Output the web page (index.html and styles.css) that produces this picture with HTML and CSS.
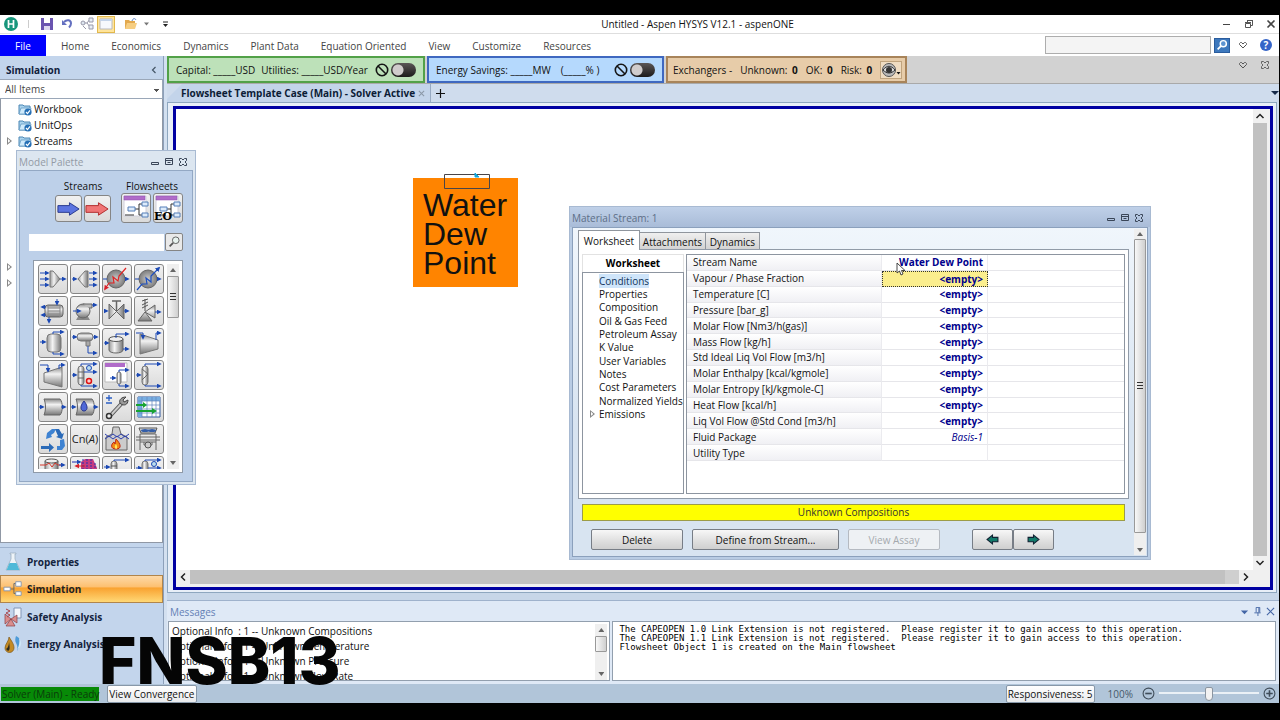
FILE: index.html
```html
<!DOCTYPE html>
<html lang="en">
<head>
<meta charset="utf-8">
<title>Untitled - Aspen HYSYS V12.1 - aspenONE</title>
<link rel="stylesheet" href="styles.css">
</head>
<body>
<svg class="defs" aria-hidden="true">
  <defs>
    <linearGradient id="metal" x1="0" y1="0" x2="0" y2="1"><stop offset="0" stop-color="#8a8a8a"/><stop offset=".35" stop-color="#f2f2f2"/><stop offset="1" stop-color="#777"/></linearGradient>
    <linearGradient id="metalH" x1="0" y1="0" x2="1" y2="0"><stop offset="0" stop-color="#999"/><stop offset=".4" stop-color="#f4f4f4"/><stop offset="1" stop-color="#777"/></linearGradient>
    <radialGradient id="ball"><stop offset="0" stop-color="#c9c9c9"/><stop offset="1" stop-color="#7c7c7c"/></radialGradient>
    <marker id="ab" viewBox="0 0 6 6" refX="4" refY="3" markerWidth="5" markerHeight="5" markerUnits="userSpaceOnUse" orient="auto"><path d="M0 0L6 3L0 6z" fill="#1c49b4"/></marker>
    <marker id="ar" viewBox="0 0 6 6" refX="4" refY="3" markerWidth="5" markerHeight="5" markerUnits="userSpaceOnUse" orient="auto"><path d="M0 0L6 3L0 6z" fill="#d8202a"/></marker>
    <symbol id="folder" viewBox="0 0 14 13"><path d="M1 2h4l1 1h6v8H1z" fill="#a9d3ee" stroke="#4c87b4"/><path d="M3 5h10l-1 6H1z" fill="#cfeafb" stroke="#5a93bd" stroke-width=".7"/><circle cx="10" cy="9" r="3.6" fill="#256fb5"/><path d="M8 9l1.5 1.6L12 7.4" stroke="#fff" fill="none" stroke-width="1.2"/></symbol>
    <symbol id="min" viewBox="0 0 10 10"><path d="M1.500 5.500h7v2h-7z" fill="none" stroke="currentColor"/></symbol>
    <symbol id="max" viewBox="0 0 10 10"><path d="M1.500 1.500h7v6h-7zM1.500 3.500h7M3.500 5.500h3" fill="none" stroke="currentColor"/></symbol>
    <symbol id="cls" viewBox="0 0 10 10"><path d="M1.500 1.500h2L5 3l1.500-1.500h2v2L7 5l1.500 1.500v2h-2L5 7 3.500 8.500h-2v-2L3 5 1.500 3.500z" fill="none" stroke="currentColor"/></symbol>
    <symbol id="heart" viewBox="0 0 10 10"><path d="M1.500 3.500l1-1h1L5 4l1.500-1.500h1l1 1v1L5 8 1.500 4.500z" fill="none" stroke="#555"/></symbol>
    <symbol id="no" viewBox="0 0 14 14"><circle cx="7" cy="7" r="5.700" fill="none" stroke="#151515" stroke-width="1.600"/><path d="M3 3l8 8" stroke="#151515" stroke-width="1.600"/></symbol>
    <symbol id="sheet" viewBox="0 0 28 28"><path d="M2 2h22v20H2z" fill="#fff" stroke="#d0d0dc"/><path d="M2 2h21v4H2z" fill="#b06cc9" stroke="#8f4ead" stroke-width=".5"/><path d="M3 21h9M13 15h4V10h3M17 15v6h3" stroke="#333" fill="none"/><path d="M6 13h7v4H6zM20 8h6v4h-6zM20 19h6v4h-6z" fill="#dcebfb" stroke="#557eb8"/></symbol>
    <symbol id="flow" viewBox="0 0 22 18"><path d="M8 9h4M12 3v11M12 3h3M12 14h3" fill="none" stroke="#666"/><path d="M1 7h7v4H1zM14 1h6v5h-6zM14 12h6v4h-6z" fill="#fff" stroke="#8395ae"/></symbol>
  </defs>
</svg>
<div class="app">
  <header class="titlebar">
    <div class="quick">
      <svg class="logo" viewBox="0 0 14 14"><circle cx="7" cy="7" r="7" fill="#17967c"/><path d="M4.500 3v8M9.500 3v8M4.500 7h5" stroke="#fff" stroke-width="1.700"/></svg>
      <span class="sep"></span>
      <button class="ic" aria-label="Save"><svg viewBox="0 0 14 14"><path d="M1 1h12v12H1z" fill="#6a54b0"/><path d="M4 1h6v5H4z" fill="#fff"/><path d="M4 9h6v4H4z" fill="#ddd8f0"/></svg></button>
      <button class="ic" aria-label="Undo"><svg viewBox="0 0 14 14"><path d="M4 5c3-3 7-2 7 1.500 0 2-1 3-2 4" fill="none" stroke="#6470c0" stroke-width="2"/><path d="M2 3v5h5z" fill="#6470c0"/></svg></button>
      <button class="ic" aria-label="Flowsheet"><svg viewBox="0 0 14 14"><path d="M3 6h4l3-4M7 6l3 4" stroke="#99a" fill="none"/><circle cx="3" cy="6" r="2" fill="#dde6ef" stroke="#99a"/><path d="M9 1h4v4H9zM9 8h4v4H9z" fill="#e7eef6" stroke="#99a"/><path d="M3 9l3 3" stroke="#99a"/></svg></button>
      <button class="ic on" aria-label="Layout"><svg viewBox="0 0 14 14"><path d="M1 2h12v10H1z" fill="#f7f9fd" stroke="#b8b9bf"/><path d="M1 3h12" stroke="#c4d4ea" stroke-width="2"/></svg></button>
      <button class="ic open" aria-label="Open"><svg viewBox="0 0 14 14"><path d="M1 3h4l1 1h5v8H1z" fill="#e3a94d"/><path d="M3 6h10l-2 6H1z" fill="#f6ce82"/><path d="M8 4c1-3 3-3 4-1" fill="none" stroke="#5a82c8"/></svg></button>
      <svg class="drop" viewBox="0 0 7 5"><path d="M1 1h5L3.500 4z" fill="#777"/></svg>
      <svg class="drop more" viewBox="0 0 7 7"><path d="M1 1h5" stroke="#222"/><path d="M1 3h5L3.500 6z" fill="#222"/></svg>
    </div>
    <h1>Untitled - Aspen HYSYS V12.1 - aspenONE</h1>
    <div class="winbtns">
      <button aria-label="Minimize"><svg viewBox="0 0 10 10"><path d="M1 5.500h7" stroke="#444"/></svg></button>
      <button aria-label="Restore"><svg viewBox="0 0 10 10"><path d="M1.500 4.500h5v4h-5zM3.500 4V1.500h5v5H7M1 3.500h6M3 1.500h6" fill="none" stroke="#555"/></svg></button>
      <button aria-label="Close"><svg viewBox="0 0 10 10"><path d="M1.500 1.500l7 7M8.500 1.500l-7 7" stroke="#444" stroke-width="1.600"/></svg></button>
    </div>
  </header>

  <nav class="ribbon">
    <button class="file">File</button>
    <a href="#">Home</a><a href="#">Economics</a><a href="#">Dynamics</a><a href="#">Plant Data</a><a href="#">Equation Oriented</a><a href="#">View</a><a href="#">Customize</a><a href="#">Resources</a>
    <div class="search">
      <input type="text" aria-label="Search">
      <button class="go" aria-label="Search"><svg viewBox="0 0 16 16"><circle cx="9.500" cy="6.500" r="3.500" fill="#5d93d0" stroke="#fff" stroke-width="1.700"/><path d="M7 9l-4 4" stroke="#fff" stroke-width="2"/></svg></button>
      <svg class="s10" viewBox="0 0 10 10"><use href="#heart"/></svg>
      <button class="help" aria-label="Help">?</button>
    </div>
  </nav>

  <div class="main">
    <aside class="side">
      <div class="side-head"><span>Simulation</span><svg class="s10" viewBox="0 0 10 10"><path d="M6.500 2L3.500 5l3 3" fill="none" stroke="#456" stroke-width="1.200"/></svg></div>
      <select class="combo" aria-label="Items"><option>All Items</option></select>
      <ul class="tree">
        <li><svg><use href="#folder"/></svg>Workbook</li>
        <li><svg><use href="#folder"/></svg>UnitOps</li>
        <li class="exp"><svg><use href="#folder"/></svg>Streams</li>
        <li class="exp gap"></li>
        <li class="exp"></li>
      </ul>
      <nav class="modes">
        <button><svg viewBox="0 0 20 20"><path d="M7 1h6v1h-1v5l5 11H3L8 7V2H7z" fill="#eef4f8" stroke="#9db0c2" stroke-width=".8"/><path d="M6.500 11h7l3 7h-13z" fill="#4fb9d8"/></svg>Properties</button>
        <button class="sel"><svg viewBox="0 0 22 18"><use href="#flow"/></svg>Simulation</button>
        <button><svg viewBox="0 0 20 20"><path d="M11 1h7v10h-7z" fill="#f5f8fc" stroke="#8195b5"/><path d="M2 7l6 5-6 5zM14 8l-6 4 6 4zM8 12l-5 7h9z" fill="#d98d8d" stroke="#8c3f45" stroke-width=".7"/><path d="M3 2l4 2-4 2 4 2-3 2" stroke="#a8434a" fill="none"/></svg>Safety Analysis</button>
        <button><svg viewBox="0 0 20 20"><path d="M6 3c4 6 5 8 5 11a4 4 0 0 1-9 0c0-4 4-7 4-11z" fill="#c48b24" stroke="#7d571a" stroke-width=".7"/><path d="M3 15c2-1 3-4 3-7 1 6 1 8-1 9z" fill="#2b2a20"/><path d="M13 2c5 2 6 7 1 15 1-4 0-6-1-8s-1-4 0-7z" fill="#4d9bd8"/><path d="M16 4c4 5 2 9-2 12 2-4 3-8 2-12z" fill="#cfe7f8"/></svg>Energy Analysis</button>
      </nav>
    </aside>

    <section class="work">
      <div class="dash">
        <div class="card green"><span>Capital: _____USD</span><span>Utilities: _____USD/Year</span><i class="tg"><svg viewBox="0 0 14 14"><use href="#no"/></svg><input type="checkbox" class="toggle" aria-label="Economics active"></i></div>
        <div class="card blue"><span>Energy Savings: _____MW</span><span>(_____% )</span><i class="tg"><svg viewBox="0 0 14 14"><use href="#no"/></svg><input type="checkbox" class="toggle" aria-label="Energy active"></i></div>
        <div class="card tan"><span>Exchangers -</span><span>Unknown: <b>0</b></span><span>OK: <b>0</b></span><span>Risk: <b>0</b></span><button class="eye" aria-label="Exchanger view"><svg viewBox="0 0 20 16"><circle cx="8" cy="8" r="6.500" fill="#bbb" stroke="#555"/><path d="M2 8c4-5 8-5 12 0-4 4-8 4-12 0z" fill="#ddd" stroke="#333" stroke-width="1"/><circle cx="8" cy="8" r="3" fill="#333"/><path d="M15.500 10h4l-2 2.500z" fill="#111"/></svg></button></div>
        <div class="dash-end"><svg class="s10" viewBox="0 0 10 10"><use href="#heart"/></svg><svg class="s10" viewBox="0 0 10 10"><use href="#cls"/></svg></div>
      </div>
      <div class="tabs">
        <button class="doc">Flowsheet Template Case (Main) - Solver Active<svg viewBox="0 0 8 8"><path d="M1 1l6 6M7 1L1 7" stroke="#8b98a8" stroke-width="1.200"/></svg></button>
        <button class="plus" aria-label="New tab"><svg viewBox="0 0 10 10"><path d="M5 0v10M0 5h10" stroke="#111" stroke-width="1.300"/></svg></button>
        <svg class="tabdrop" viewBox="0 0 8 5"><path d="M0 0h8L4 4z" fill="#162a4a"/></svg>
      </div>
      <div class="frame">
        <div class="canvas">
          <div class="sheet">
            <div class="node">Water<br>Dew<br>Point<svg class="tag" viewBox="0 0 46 17"><path d="M.5 1.500h45v14H.5z" fill="none" stroke="#4a4548"/><path d="M31 0l4 4h-4z" fill="#12a7dc" stroke="#12a7dc"/></svg></div>
          </div>
          <div class="vbar"><svg viewBox="0 0 10 10"><path d="M1.500 7L5 3.500 8.500 7" fill="none" stroke="#222" stroke-width="1.500"/></svg><span class="thumb"></span><svg viewBox="0 0 10 10"><path d="M1.500 3L5 6.500 8.500 3" fill="none" stroke="#222" stroke-width="1.500"/></svg></div>
          <div class="hbar"><svg viewBox="0 0 10 10"><path d="M7 1.500L3.500 5 7 8.500" fill="none" stroke="#222" stroke-width="1.500"/></svg><span class="thumb"></span><span class="rest"></span><svg viewBox="0 0 10 10"><path d="M3 1.500L6.500 5 3 8.500" fill="none" stroke="#222" stroke-width="1.500"/></svg></div>
        </div>
      </div>
      <section class="messages">
        <div class="msg-head"><span>Messages</span>
          <svg viewBox="0 0 10 10"><path d="M1 4h8L5 8z" fill="#4365a5"/></svg>
          <svg viewBox="0 0 10 10"><path d="M3.500 6V.500h4V6M1.500 6.500h7M5.500 6v4M6.500 1v5" fill="none" stroke="#4365a5"/></svg>
          <svg viewBox="0 0 10 10"><path d="M1 1l8 8M9 1L1 9" stroke="#4365a5" stroke-width="1.200"/></svg>
        </div>
        <div class="msg-body">
          <div class="msg-list">
            <ul><li>Optional Info &nbsp;: 1 -- Unknown Compositions</li><li>Optional Info &nbsp;: 1 -- Unknown Temperature</li><li>Optional Info &nbsp;: 1 -- Unknown Pressure</li><li>Optional Info &nbsp;: 1 -- Unknown Flow Rate</li></ul>
            <div class="sb"><i class="up"></i><span class="thumb"></span><i class="down"></i></div>
          </div>
          <pre class="log">The CAPEOPEN 1.0 Link Extension is not registered.  Please register it to gain access to this operation.
The CAPEOPEN 1.1 Link Extension is not registered.  Please register it to gain access to this operation.
Flowsheet Object 1 is created on the Main flowsheet</pre>
        </div>
      </section>
    </section>
  </div>

  <footer class="status">
    <span class="ready">Solver (Main) - Ready</span>
    <button class="sbtn">View Convergence</button>
    <button class="sbtn resp">Responsiveness: 5</button>
    <label class="pct" for="zoom">100%</label>
    <svg class="zi" viewBox="0 0 12 12"><circle cx="6" cy="6" r="5" fill="none" stroke="#3f4c59"/><path d="M3 6h6" stroke="#3f4c59" stroke-width="1.500"/></svg>
    <input id="zoom" type="range" min="0" max="100" value="50">
    <svg class="zi" viewBox="0 0 12 12"><circle cx="6" cy="6" r="5" fill="none" stroke="#3f4c59"/><path d="M3 6h6M6 3v6" stroke="#3f4c59" stroke-width="1.500"/></svg>
  </footer>
</div>

<section class="win palette">
  <div class="win-title"><span>Model Palette</span><button aria-label="Minimize"><svg><use href="#min"/></svg></button><button aria-label="Maximize"><svg><use href="#max"/></svg></button><button aria-label="Close"><svg><use href="#cls"/></svg></button></div>
  <div class="pal-body">
    <div class="groups">
      <div class="grp"><h2>Streams</h2><div class="row">
        <button class="pb" aria-label="Material stream"><svg viewBox="0 0 26 26"><path d="M2 10h12V7l10 6.500L14 20v-3H2z" fill="#5c74e0" stroke="#28388c"/></svg></button>
        <button class="pb" aria-label="Energy stream"><svg viewBox="0 0 26 26"><path d="M1 10h13V7l10 6.500L14 20v-3H1z" fill="#f07474" stroke="#b02c2c"/></svg></button></div></div>
      <div class="grp"><h2>Flowsheets</h2><div class="row">
        <button class="pb tall" aria-label="Subflowsheet"><svg viewBox="0 0 28 28"><use href="#sheet"/></svg></button>
        <button class="pb tall eo" aria-label="EO subflowsheet"><svg viewBox="0 0 28 28"><use href="#sheet"/></svg><b>EO</b></button></div></div>
    </div>
    <div class="psearch"><input type="text" aria-label="Search palette"><button aria-label="Search"><svg viewBox="0 0 16 16"><circle cx="10" cy="6" r="3.800" fill="#e8f3ef" stroke="#555"/><path d="M7 9l-4 4" stroke="#555" stroke-width="2"/></svg></button></div>
    <div class="pal-box">
      <div class="grid">
        <button class="pb" aria-label="Mixer"><svg viewBox="0 0 28 28"><path d="M11 6h3l7 8-7 8h-3z" fill="url(#metalH)" stroke="#777"/><g stroke="#1c49b4"><path d="M1 8h8" marker-end="url(#ab)"/><path d="M1 14h8" marker-end="url(#ab)"/><path d="M1 20h8" marker-end="url(#ab)"/><path d="M21 14h5" marker-end="url(#ab)"/></g></svg></button>
        <button class="pb" aria-label="Tee"><svg viewBox="0 0 28 28"><path d="M17 6h-3l-7 8 7 8h3z" fill="url(#metalH)" stroke="#777"/><g stroke="#1c49b4"><path d="M1 14h4" marker-end="url(#ab)"/><path d="M18 8h7" marker-end="url(#ab)"/><path d="M18 14h7" marker-end="url(#ab)"/><path d="M18 20h7" marker-end="url(#ab)"/></g></svg></button>
        <button class="pb" aria-label="Cooler"><svg viewBox="0 0 28 28"><circle cx="13" cy="14" r="9" fill="url(#ball)" stroke="#666"/><path d="M23 3l-7 8-1 5-5-4 1 6-5 0-4 6" fill="none" stroke="#e02424" stroke-width="1.200" marker-end="url(#ar)"/><path d="M0 14h4M22 14h3" stroke="#1c49b4" marker-end="url(#ab)"/></svg></button>
        <button class="pb" aria-label="Heater"><svg viewBox="0 0 28 28"><circle cx="13" cy="14" r="9" fill="url(#ball)" stroke="#666"/><path d="M2 25l5-6 5 0-1-6 5 4 0-6 8-8" fill="none" stroke="#1d4fc0" stroke-width="1.200" marker-end="url(#ab)"/><path d="M0 14h4M22 14h3" stroke="#1c49b4" marker-end="url(#ab)"/></svg></button>
        <button class="pb" aria-label="Heat exchanger"><svg viewBox="0 0 28 28"><rect x="6" y="8" width="18" height="12" rx="3" fill="url(#metal)" stroke="#666"/><path d="M9 8v12M21 8v12M9 11h12M9 14h12M9 17h12" stroke="#888"/><g stroke="#1c49b4"><path d="M7 10H3" marker-end="url(#ab)"/><path d="M7 18H3" marker-end="url(#ab)"/><path d="M18 2v5" marker-end="url(#ab)"/><path d="M10 20v5" marker-end="url(#ab)"/></g></svg></button>
        <button class="pb" aria-label="Pump"><svg viewBox="0 0 28 28"><path d="M5 23h14l-3-5H8z" fill="#888"/><circle cx="12" cy="14" r="7" fill="url(#metal)" stroke="#666"/><path d="M12 7h9v4h-3" fill="#bbb" stroke="#666"/><path d="M21 8h4" stroke="#1c49b4" marker-end="url(#ab)"/><path d="M2 14h7" stroke="#1c49b4" marker-end="url(#ab)"/></svg></button>
        <button class="pb" aria-label="Control valve"><svg viewBox="0 0 28 28"><path d="M6 7v15l15-15v15z" fill="url(#metalH)" stroke="#666"/><path d="M13.500 14V4M9 4h9" stroke="#666" stroke-width="1.500"/><path d="M1 14h3" stroke="#1c49b4" marker-end="url(#ab)"/><path d="M21 14h4" stroke="#1c49b4" marker-end="url(#ab)"/></svg></button>
        <button class="pb" aria-label="Relief valve"><svg viewBox="0 0 28 28"><path d="M10 15l-7 9h14zM10 15l10-7v13z" fill="url(#metal)" stroke="#666"/><path d="M10 14V2M7 4l6-2M7 8l6-3M7 11l6-3" stroke="#555"/><path d="M20 15h5" stroke="#1c49b4" marker-end="url(#ab)"/></svg></button>
        <button class="pb" aria-label="Separator"><svg viewBox="0 0 28 28"><rect x="8" y="5" width="14" height="18" rx="4" fill="url(#metalH)" stroke="#777"/><g stroke="#1c49b4" fill="none"><path d="M1 13h5" marker-end="url(#ab)"/><path d="M14 5V3h10" marker-end="url(#ab)"/><path d="M14 23v2h10" marker-end="url(#ab)"/></g></svg></button>
        <button class="pb" aria-label="3-phase separator"><svg viewBox="0 0 28 28"><rect x="6" y="4" width="16" height="8" rx="4" fill="url(#metal)" stroke="#777"/><path d="M15 12h4v5h-4z" fill="#aaa" stroke="#777"/><g stroke="#1c49b4" fill="none"><path d="M1 8h4" marker-end="url(#ab)"/><path d="M22 8h4" marker-end="url(#ab)"/><path d="M17 17v7h8" marker-end="url(#ab)"/></g></svg></button>
        <button class="pb" aria-label="Tank"><svg viewBox="0 0 28 28"><path d="M6 10v11c0 4 14 4 14 0V10z" fill="url(#metalH)" stroke="#666"/><ellipse cx="13" cy="10" rx="7" ry="2.500" fill="#eee" stroke="#555"/><g stroke="#1c49b4" fill="none"><path d="M1 14h4" marker-end="url(#ab)"/><path d="M13 9V5h12" marker-end="url(#ab)"/><path d="M20 20h5" marker-end="url(#ab)"/></g></svg></button>
        <button class="pb" aria-label="Compressor"><svg viewBox="0 0 28 28"><path d="M5 5l18 6v9L5 25z" fill="url(#metal)" stroke="#777"/><g stroke="#1c49b4" fill="none"><path d="M1 4h7v5" marker-end="url(#ab)"/><path d="M21 11V4h4" marker-end="url(#ab)"/></g></svg></button>
        <button class="pb" aria-label="Expander"><svg viewBox="0 0 28 28"><path d="M23 6L5 12v9l18 5z" fill="url(#metal)" stroke="#777"/><g stroke="#1c49b4" fill="none"><path d="M1 4h8v6" marker-end="url(#ab)"/><path d="M20 8V4h5" marker-end="url(#ab)"/></g></svg></button>
        <button class="pb" aria-label="Distillation column"><svg viewBox="0 0 28 28"><rect x="7" y="5" width="6" height="19" rx="3" fill="url(#metalH)" stroke="#777"/><path d="M7 11h6M7 17h6" stroke="#666"/><g stroke="#1c49b4" fill="none"><path d="M1 14h4" marker-end="url(#ab)"/><path d="M10 5V3h15" marker-end="url(#ab)"/><path d="M13 11h12" marker-end="url(#ab)"/><path d="M10 24v1h15" marker-end="url(#ab)"/></g><circle cx="18" cy="7" r="2.500" fill="#bde" stroke="#1c49b4"/><circle cx="18" cy="20" r="2.500" fill="#fcc" stroke="#d11" stroke-width="1.500"/></svg></button>
        <button class="pb" aria-label="Column subflowsheet"><svg viewBox="0 0 28 28"><path d="M2 2h22v19H2z" fill="#fff" stroke="#bbb"/><path d="M2 2h20v4H2z" fill="#b06cc9"/><rect x="14" y="11" width="4" height="12" rx="2" fill="url(#metalH)" stroke="#777"/><g stroke="#1c49b4" fill="none"><path d="M7 17h5" marker-end="url(#ab)"/><path d="M16 11V9h9" marker-end="url(#ab)"/><path d="M16 23v2h9" marker-end="url(#ab)"/></g></svg></button>
        <button class="pb" aria-label="Absorber"><svg viewBox="0 0 28 28"><rect x="7" y="5" width="6" height="19" rx="3" fill="url(#metalH)" stroke="#777"/><path d="M7 8l6 5-6 6" stroke="#666" fill="none"/><g stroke="#1c49b4" fill="none"><path d="M1 14h4" marker-end="url(#ab)"/><path d="M10 5V3h15" marker-end="url(#ab)"/><path d="M10 24v1h15" marker-end="url(#ab)"/></g></svg></button>
        <button class="pb" aria-label="Pipe segment"><svg viewBox="0 0 28 28"><path d="M5 6h16c3 3 3 13 0 16H5c2-5 2-11 0-16z" fill="url(#metal)" stroke="#666"/><path d="M0 14h4" stroke="#1c49b4" marker-end="url(#ab)"/><path d="M22 14h4" stroke="#1c49b4" marker-end="url(#ab)"/></svg></button>
        <button class="pb" aria-label="Aqueous pipe"><svg viewBox="0 0 28 28"><path d="M5 6h16c3 3 3 13 0 16H5c2-5 2-11 0-16z" fill="url(#metal)" stroke="#666"/><path d="M13 8c5 6 3 10 0 10s-5-4 0-10z" fill="#4f68d8" stroke="#26358c"/><path d="M0 14h4" stroke="#1c49b4" marker-end="url(#ab)"/><path d="M22 14h4" stroke="#1c49b4" marker-end="url(#ab)"/></svg></button>
        <button class="pb" aria-label="Adjust"><svg viewBox="0 0 28 28"><path d="M3 5h6M6 2v6M3 10h6" stroke="#2b5fc4" stroke-width="1.300"/><path d="M7 23L20 9" stroke="#555" stroke-width="4"/><path d="M7 23L20 9" stroke="#ccc" stroke-width="2"/><path d="M23 4l-3 3 1 2 4-2c0 5-4 6-7 4s-1-7 5-7z" fill="#999" stroke="#444"/><circle cx="6" cy="23" r="2.500" fill="#eee" stroke="#333" stroke-width="1.500"/></svg></button>
        <button class="pb" aria-label="Spreadsheet"><svg viewBox="0 0 28 28"><path d="M3 4h22v20H3z" fill="#fff" stroke="#335aa0"/><path d="M3 4h22v4H3zM3 4h4v20H3z" fill="#78aee2"/><path d="M3 8h22M3 12h22M3 16h22M3 20h22M7 4v20M12 4v20M17 4v20M21 4v20" stroke="#5f84bb" stroke-width=".7"/><path d="M1 12h8M1 18h17" stroke="#17a333" stroke-width="2"/><path d="M8 9l4 3-4 3zM17 15l5 3-5 3z" fill="#17a333"/></svg></button>
        <button class="pb" aria-label="Recycle"><svg viewBox="0 0 28 28"><path d="M2 21h8v-3l5 4.500-5 4.500v-3H2z" fill="#2c6bb8"/><path d="M7 14l1-6 5-4h4l-2 4-3 2 1 2z" fill="#3f83d2"/><path d="M16 4h4l3 5 2-1-2 6-6-2 2-1z" fill="#2c6bb8"/><path d="M21 15l4-1 1 7-3 4h-5v-4h3z" fill="#3f83d2"/></svg></button>
        <button class="pb txt">Cn(<i>A</i>)</button>
        <button class="pb" aria-label="Fired heater"><svg viewBox="0 0 28 28"><path d="M10 2h6l2 7 6 3v13H3V12l6-3z" fill="#ccc" stroke="#666"/><path d="M2 9l4 3 4-3 4 3 4-3 4 3 4-3M2 14l4-3 4 3 4-3 4 3 4-3 4 3" stroke="#2c3fae" fill="none"/><path d="M13 14c5 5 6 10 0 10s-5-5-2-7l1 2z" fill="#f58b14" stroke="#c02a12"/><path d="M13 19c2 3 1 5 0 5s-2-3 0-5z" fill="#ffe75e"/></svg></button>
        <button class="pb" aria-label="Air cooler"><svg viewBox="0 0 28 28"><path d="M4 3h18l-2 5H6z" fill="#ddd" stroke="#555"/><ellipse cx="10" cy="5.500" rx="4" ry="1.500" fill="#335da8"/><ellipse cx="17" cy="5.500" rx="4" ry="1.500" fill="#335da8"/><path d="M1 12h24M1 15h24M5 9h16v8H5zM5 17v8M21 17v8M9 17v3h8v-3" fill="none" stroke="#666"/><circle cx="13" cy="20" r="3" fill="#ccc" stroke="#555"/></svg></button>
        <button class="pb" aria-label="LNG exchanger"><svg viewBox="0 0 28 28"><path d="M6 4h13v20H6z" fill="url(#metalH)" stroke="#666"/><ellipse cx="12.500" cy="4" rx="6.500" ry="2" fill="#eee" stroke="#555"/><path d="M1 8h6l3-2 3 4 3-4 3 2h6" stroke="#d2362b" fill="none"/><path d="M20 8h5" stroke="#1c49b4" marker-end="url(#ab)"/></svg></button>
        <button class="pb" aria-label="Plate exchanger"><svg viewBox="0 0 28 28"><path d="M10 5l4-3h8l4 9v11H10z" fill="#c63a80"/><path d="M12 2v20M16 2v20M20 2v20M24 6v16" stroke="#2630b0" stroke-dasharray="2 1"/><path d="M1 5h8" stroke="#1c2bb4" marker-end="url(#ab)"/><path d="M14 9H5" stroke="#d22" marker-end="url(#ar)"/></svg></button>
        <button class="pb" aria-label="Stripper"><svg viewBox="0 0 28 28"><rect x="8" y="4" width="6" height="20" rx="3" fill="url(#metalH)" stroke="#777"/><path d="M8 9h6" stroke="#555"/><g stroke="#1c49b4" fill="none"><path d="M1 10h5" marker-end="url(#ab)"/><path d="M11 4V3h14" marker-end="url(#ab)"/></g></svg></button>
        <button class="pb" aria-label="Refluxed absorber"><svg viewBox="0 0 28 28"><rect x="7" y="4" width="6" height="20" rx="3" fill="url(#metalH)" stroke="#777"/><g stroke="#1c49b4" fill="none"><path d="M1 11h5" marker-end="url(#ab)"/><path d="M10 4V3h15" marker-end="url(#ab)"/><path d="M13 11h12" marker-end="url(#ab)"/></g><circle cx="19" cy="7" r="2.500" fill="#bde" stroke="#1c49b4"/></svg></button>
      </div>
      <div class="sb"><i class="up"></i><span class="thumb grip"></span><i class="down"></i></div>
    </div>
  </div>
</section>

<section class="win stream">
  <div class="win-title"><span>Material Stream: 1</span><button aria-label="Minimize"><svg><use href="#min"/></svg></button><button aria-label="Maximize"><svg><use href="#max"/></svg></button><button aria-label="Close"><svg><use href="#cls"/></svg></button></div>
  <div class="st-body">
    <div class="st-main">
      <div class="st-tabs"><button class="cur">Worksheet</button><button>Attachments</button><button>Dynamics</button></div>
      <div class="st-panel">
        <div class="st-nav">
          <h2>Worksheet</h2>
          <ul><li><span class="hl">Conditions</span></li><li>Properties</li><li>Composition</li><li>Oil &amp; Gas Feed</li><li>Petroleum Assay</li><li>K Value</li><li>User Variables</li><li>Notes</li><li>Cost Parameters</li><li>Normalized Yields</li><li class="exp">Emissions</li></ul>
        </div>
        <div class="st-table">
          <table>
            <tbody>
            <tr><th>Stream Name</th><td>Water Dew Point</td><td></td></tr>
            <tr><th>Vapour / Phase Fraction</th><td class="act">&lt;empty&gt;</td><td></td></tr>
            <tr><th>Temperature [C]</th><td>&lt;empty&gt;</td><td></td></tr>
            <tr><th>Pressure [bar_g]</th><td>&lt;empty&gt;</td><td></td></tr>
            <tr><th>Molar Flow [Nm3/h(gas)]</th><td>&lt;empty&gt;</td><td></td></tr>
            <tr><th>Mass Flow [kg/h]</th><td>&lt;empty&gt;</td><td></td></tr>
            <tr><th>Std Ideal Liq Vol Flow [m3/h]</th><td>&lt;empty&gt;</td><td></td></tr>
            <tr><th>Molar Enthalpy [kcal/kgmole]</th><td>&lt;empty&gt;</td><td></td></tr>
            <tr><th>Molar Entropy [kJ/kgmole-C]</th><td>&lt;empty&gt;</td><td></td></tr>
            <tr><th>Heat Flow [kcal/h]</th><td>&lt;empty&gt;</td><td></td></tr>
            <tr><th>Liq Vol Flow @Std Cond [m3/h]</th><td>&lt;empty&gt;</td><td></td></tr>
            <tr><th>Fluid Package</th><td class="it">Basis-1</td><td></td></tr>
            <tr><th>Utility Type</th><td></td><td></td></tr>
            </tbody>
          </table>
        </div>
      </div>
      <div class="warn">Unknown Compositions</div>
      <div class="acts">
        <button class="b">Delete</button><button class="b wide">Define from Stream...</button><button class="b" disabled>View Assay</button>
        <div class="pair"><button class="b" aria-label="Previous"><svg viewBox="0 0 12 10"><path d="M1 5l5-4v2h5v4H6v2z" fill="#127a6a" stroke="#123"/></svg></button><button class="b" aria-label="Next"><svg viewBox="0 0 12 10"><path d="M11 5L6 1v2H1v4h5v2z" fill="#127a6a" stroke="#123"/></svg></button></div>
      </div>
    </div>
    <div class="sb"><i class="up"></i><span class="thumb grip"></span><i class="down"></i></div>
  </div>
</section>

<svg class="cursor" viewBox="0 0 10 14"><path d="M1 1v10l2.500-2L5 13l2-1-1.500-3.500H9z" fill="#fff" stroke="#333" stroke-width=".9"/></svg>
<div class="mark">FNSB13</div>
</body>
</html>
```
FILE: styles.css
```css
* { box-sizing: border-box; }
html, body { height: 100%; }
body { margin: 0; background: #000; font: 10px/16px "Open Sans", "Noto Sans", sans-serif; color: #111; position: relative; overflow: hidden; }
button, input, select { font: inherit; color: inherit; margin: 0; padding: 0; border: 0; background: none; }
button { display: flex; align-items: center; justify-content: center; white-space: nowrap; }
ul { list-style: none; margin: 0; padding: 0; }
h1, h2 { margin: 0; font-size: 10px; font-weight: 400; }
i { font-style: normal; }
.defs { position: absolute; width: 0; height: 0; }
.s10 { width: 10px; height: 10px; }

.app { display: flex; flex-direction: column; height: 100%; padding: 15px 1px 17px 0; }

/* title bar */
.titlebar { display: grid; grid-template-columns: 1fr auto 1fr; align-items: center; height: 19px; background: #fff; border-bottom: 1px solid #dedede; }
.titlebar h1 { padding-left: 116px; }
.quick { display: flex; align-items: center; gap: 4px; padding-left: 4px; }
.quick .logo { width: 14px; height: 14px; }
.quick .sep { width: 1px; height: 8px; background: #ccc; margin: 0 6px; }
.ic { width: 16px; height: 17px; }
.ic svg { width: 14px; height: 14px; }
.ic.on { background: #ffe49a; border: 1px solid #e2b84c; width: 18px; margin-left: -2px; }
.ic.open { margin-left: 4px; }
.drop { width: 7px; height: 6px; }
.drop.more { margin-left: 8px; height: 7px; }
.winbtns { display: flex; justify-content: flex-end; gap: 12px; padding-right: 3px; }
.winbtns svg { width: 10px; height: 10px; }

/* ribbon */
.ribbon { display: flex; align-items: center; height: 22px; background: #fff; }
.ribbon a { color: #444; text-decoration: none; padding: 2px 0 0; margin-right: 22px; white-space: nowrap; }
.file { background: #0000fe; color: #fff; width: 46px; height: 21px; margin-right: 15px; align-self: flex-end; }
.search { margin-left: auto; display: flex; align-items: center; gap: 8px; padding-right: 7px; }
.search input { width: 166px; height: 18px; border: 1px solid #adadad; background: #f4f4f4; margin-right: -5px; }
.go { width: 16px; height: 15px; background: #3d78bd; border: 1px solid #2a5c9d; }
.go svg { width: 14px; height: 14px; }
.help { width: 12px; height: 12px; margin-left: 4px; border-radius: 50%; background: #3565c8; color: #fff; font-weight: 700; }

.main { flex: 1; min-height: 0; display: grid; grid-template-columns: 164px 1fr; gap: 3px; background: #d3e0f0; }

/* sidebar */
.side { display: flex; flex-direction: column; min-height: 0; background: #c3d5ec; border-right: 1px solid #8da0ba; }
.side-head { display: flex; align-items: center; justify-content: space-between; height: 23px; padding: 4px 4px 0 6px; font-weight: 700; color: #10213c; }
.combo { appearance: none; height: 20px; padding-left: 5px; color: #444; border: 1px solid #9aa7b8; border-left: 0; background: linear-gradient(#555, #555) 154px 9px / 5px 1px no-repeat, linear-gradient(#555, #555) 155px 10px / 3px 1px no-repeat, linear-gradient(#555, #555) 156px 11px / 1px 1px no-repeat, #fff; }
.tree { flex: 1; background: #fff; border: 1px solid #9098a5; border-top: 0; padding-top: 2px; margin-bottom: 4px; }
.tree li { display: flex; align-items: center; gap: 2px; height: 16px; padding-left: 17px; position: relative; }
.tree svg { width: 14px; height: 13px; }
.tree .gap { margin-top: 110px; }
.exp::before { content: ""; position: absolute; left: 6px; top: 4px; width: 5px; height: 8px; background: #888; clip-path: polygon(0 0, 100% 50%, 0 100%, 0 85%, 65% 50%, 20% 22%, 20% 80%, 0 80%); }
.modes { height: 137px; border-top: 1px solid #9db1cd; }
.modes button { width: 100%; height: 27px; justify-content: flex-start; gap: 4px; padding-left: 3px; font-weight: 700; color: #14243f; }
.modes svg { width: 20px; height: 20px; }
.modes .sel { height: 28px; padding-left: 2px; color: #222; border: 1px solid #b0854c; background: linear-gradient(#fdd9a8, #fdc070 42%, #f9a230 46%, #ffd876); }

/* dashboard */
.work { display: flex; flex-direction: column; min-width: 0; min-height: 0; }
.dash { display: flex; gap: 2px; height: 28px; background: #d2d2d2; border-bottom: 1px solid #a9a9a9; }
.card { display: flex; align-items: center; gap: 6px; padding: 0 7px; border: 2px solid; white-space: nowrap; flex: none; }
.green { width: 258px; background: #bde1b9; border-color: #52a148; }
.blue { width: 237px; background: #b5d9fd; border-color: #3f68c0; gap: 10px; }
.tan { width: 241px; background: #e7cca9; border-color: #a8845a; gap: 8px; padding: 0 5px; }
.tan b { margin-left: 2px; }
.tg { display: flex; align-items: center; gap: 2px; margin-left: auto; }
.tg svg { width: 14px; height: 14px; }
.toggle { appearance: none; width: 25px; height: 14px; border-radius: 7px; background: radial-gradient(circle at 7px 7px, #d0cccc 5px, transparent 6px), linear-gradient(#5b5656, #1c1a1a); }
.eye { margin-left: auto; width: 22px; height: 18px; border: 1px solid #c0a47e; background: #efdcc2; }
.eye svg { width: 20px; height: 16px; }
.dash-end { margin-left: auto; display: flex; gap: 12px; padding: 4px 9px 0 0; color: #666; }

.tabs { display: flex; align-items: center; height: 18px; background: #cfdced; }
.doc { height: 18px; padding: 0 5px 0 14px; gap: 3px; font-weight: 700; color: #0c1c36; background: linear-gradient(135deg, transparent 10px, #c3d4ea 11px); border-right: 1px solid #98aac2; }
.doc svg { width: 7px; height: 7px; }
.plus { margin-left: 5px; }
.plus svg { width: 9px; height: 9px; }
.tabdrop { margin: 0 0 0 auto; width: 8px; height: 5px; }

/* flowsheet */
.frame { flex: 1; min-height: 0; padding: 3px 3px 2px 5px; margin-right: 2px; border: 1px solid #8ea7bf; background: #e8eff8; display: flex; }
.canvas { flex: 1; display: grid; grid-template: 1fr 14px / 1fr 14px; background: #f0f0f0; border: 3px solid #0000a2; padding: 0 3px 3px 0; }
.sheet { background: #fff; position: relative; overflow: hidden; }
.node { position: absolute; left: 237px; top: 69px; width: 105px; height: 109px; padding: 13px 0 0 10px; background: #ff8400; color: #111; font: 32px/29px "Liberation Sans", Arial, sans-serif; }
.tag { position: absolute; left: 31px; top: -5px; width: 46px; height: 17px; overflow: visible; }
.vbar, .hbar { display: flex; align-items: center; }
.vbar { flex-direction: column; }
.vbar svg, .hbar svg { width: 10px; height: 10px; flex: none; margin: 2px; }
.canvas .thumb { flex: 1; align-self: stretch; background: #c1c1c1; }
.hbar .rest { width: 14px; align-self: stretch; background: #cfcfcf; }

/* messages */
.messages { height: 91px; flex: none; display: flex; flex-direction: column; padding-top: 7px; background: #c7d6e8; }
.msg-head { display: flex; align-items: center; gap: 4px; height: 21px; padding: 1px 4px 0 3px; background: #dfe9f6; color: #6480b5; border-top: 1px solid #9fb2cc; }
.msg-head span { margin-right: auto; }
.msg-head svg { width: 9px; height: 9px; }
.msg-body { flex: 1; min-height: 0; display: grid; grid-template-columns: 2fr 3fr; gap: 2px; padding: 0 3px 3px 1px; background: #dfe9f6; }
.msg-list, .log { background: #fff; border: 1px solid #929fae; overflow: hidden; }
.msg-list { display: flex; padding: 2px 2px 0 3px; }
.msg-list ul { flex: 1; }
.msg-list li { height: 15px; line-height: 14px; white-space: nowrap; }
.log { margin: 0; padding: 3px 6px; color: #000; font: 9px/9px "DejaVu Sans Mono", monospace; }

/* small scroll bars */
.sb { display: flex; flex-direction: column; align-items: center; width: 12px; background: #efefef; }
.sb i { width: 6px; height: 4px; margin: 4px 0; background: #666; flex: none; }
.sb .up { clip-path: polygon(50% 0, 100% 100%, 0 100%); }
.sb .down { clip-path: polygon(0 0, 100% 0, 50% 100%); margin-top: auto; }
.sb .thumb { width: 12px; height: 16px; border: 1px solid #999; border-radius: 1px; background: linear-gradient(90deg, #f8f8f8, #cfcfcf); }
.grip::before { content: ""; display: block; width: 6px; height: 7px; margin: 0 auto; background: repeating-linear-gradient(#333 0 1px, transparent 1px 3px); }

/* status bar */
.status { display: flex; align-items: center; height: 19px; background: #b1c5d9; padding-right: 3px; white-space: nowrap; }
.ready { background: #078a07; color: #0b3a0b; min-width: 96px; padding-left: 1px; margin: 0 8px 0 1px; line-height: 14px; }
.sbtn { height: 18px; padding: 0 1px; border: 1px solid #8797a8; border-radius: 2px; background: linear-gradient(#fff, #e9eaec); color: #111; }
.resp { margin-left: auto; margin-right: 13px; }
.pct { color: #46586b; margin-right: 9px; }
.zi { width: 13px; height: 13px; }
#zoom { appearance: none; width: 100px; height: 16px; margin: 0 4px; background: linear-gradient(#eaf0f6, #eaf0f6) 0 6px / 100% 2px no-repeat; }
#zoom::-webkit-slider-thumb { appearance: none; width: 8px; height: 14px; background: #f2f2f2; border: 1px solid #8b95a0; border-radius: 2px 2px 4px 4px; }

/* floating windows */
.win { position: absolute; border: 1px solid #a8bad2; }
.win-title { display: flex; align-items: center; gap: 4px; }
.win-title span { margin-right: auto; }
.win-title svg { width: 10px; height: 10px; color: #3a4658; display: block; }
.palette { left: 16px; top: 150px; width: 180px; background: #dce6f0; padding: 0 2px 2px; }
.palette .win-title { height: 19px; color: #939aa5; padding: 2px 5px 0 0; }
.pal-body { background: #bdd0e9; border: 1px solid #93a8c4; padding: 8px 9px 8px; }
.groups { display: flex; justify-content: flex-end; gap: 10px; }
.grp h2 { text-align: center; line-height: 14px; color: #111; }
.row { display: flex; justify-content: center; align-items: center; gap: 2px; height: 30px; }
.pb { width: 30px; height: 30px; border: 1px solid #858585; border-radius: 3px; background: linear-gradient(#f1f1f1, #dadada); position: relative; overflow: hidden; }
.pb svg { width: 28px; height: 28px; flex: none; }
.row .pb { width: 27px; height: 27px; }
.row .pb svg { width: 25px; height: 25px; }
.row .tall { width: 30px; height: 30px; }
.row .tall svg { width: 28px; height: 28px; }
.eo b { position: absolute; left: 0; bottom: 0; font: 700 11px/11px "DejaVu Serif", serif; color: #000; }
.txt { font-size: 11px; color: #222; }
.txt i { font-style: italic; }
.psearch { display: flex; gap: 1px; margin-top: 10px; align-items: center; }
.psearch input { flex: 1; min-width: 0; height: 17px; background: #fff; }
.psearch button { width: 18px; height: 18px; border: 1px solid #858585; border-radius: 2px; background: #e9e9e9; }
.psearch svg { width: 14px; height: 14px; }
.pal-box { display: flex; justify-content: space-between; height: 213px; margin: 9px 0 0 4px; padding: 3px 3px 3px 4px; background: #fff; border: 1px solid #8f9aa8; overflow: hidden; }
.grid { display: grid; grid-template-columns: repeat(4, 30px); grid-auto-rows: 30px; gap: 2px; overflow: hidden; flex: none; }
.pal-box .thumb { height: 42px; padding-top: 16px; }

.stream { left: 569px; top: 206px; width: 582px; background: #b9cce4; padding: 0 2px 2px; }
.stream .win-title { height: 20px; color: #5d6e87; background: linear-gradient(#bfd0e8, #a9bcd8); margin: 0 -2px; padding: 2px 6px 0 2px; }
.st-body { display: flex; border: 1px solid #8ba0bc; background: linear-gradient(#f0f6fc, #d8e4f1 60%); padding: 1px 1px 1px 5px; }
.st-main { flex: 1; min-width: 0; }
.st-tabs { display: flex; align-items: flex-end; height: 20px; }
.st-tabs button { width: 67px; height: 17px; padding: 2px 0 0; border: 1px solid #8f959d; border-bottom: 0; background: linear-gradient(#efefef, #d3d3d3); margin-right: -1px; }
.st-tabs button:last-child { width: 55px; }
.st-tabs .cur { width: 62px; height: 20px; padding: 0; background: #fff; margin-bottom: -1px; position: relative; }
.st-panel { display: grid; grid-template-columns: 102px 1fr; gap: 2px; height: 250px; margin-right: 5px; padding: 4px 3px; background: #fff; border: 1px solid #919ba8; }
.st-nav { display: flex; flex-direction: column; min-width: 0; min-height: 0; border: 1px solid #e2e2e2; }
.st-nav h2 { height: 17px; line-height: 17px; text-align: center; font-weight: 700; color: #000; }
.st-nav ul { flex: 1; border: 1px solid #8d95a0; margin: 0 -1px -1px; padding-top: 2px; }
.st-nav li { height: 13px; line-height: 13px; padding-left: 16px; position: relative; white-space: nowrap; }
.st-nav li:nth-child(3n) { height: 14px; }
.hl { background: #cfe5fa; color: #12355c; }
.st-nav .exp::before { top: 2px; left: 7px; }
.st-table { border: 1px solid #8d95a0; }
table { width: 100%; height: 206px; border-collapse: separate; border-spacing: 0; table-layout: fixed; }
th, td { padding: 0 4px 0 6px; height: 15px; line-height: 14px; border-bottom: 1px solid #e6e6ea; border-right: 1px solid #ebebef; overflow: hidden; white-space: nowrap; }
th { width: 195px; text-align: left; font-weight: 400; color: #111; background: linear-gradient(#fff, #f0f0f4); }
td:nth-child(2) { width: 106px; text-align: right; font-weight: 700; color: #00008c; padding-left: 0; }
td:nth-child(3) { border-right: 0; }
td.it:nth-child(2) { font-weight: 400; font-style: italic; }
td.act { background: #fbee8e; border: 1px dotted #333; line-height: 12px; }
.warn { margin: 5px 9px 0 4px; height: 17px; line-height: 15px; text-align: center; background: #ff0; border: 1px solid #9c9c48; color: #333; }
.acts { display: flex; gap: 9px; padding: 8px 0 5px 13px; }
.b { width: 92px; height: 21px; border: 1px solid #777d86; border-radius: 2px; background: linear-gradient(#f7f7f7, #dedede 60%, #cfcfcf); color: #111; }
.b.wide { width: 147px; }
.b:disabled { color: #a5a9ae; border-color: #b5bac1; background: #eef1f4; }
.pair { display: flex; margin-left: 23px; }
.pair .b { width: 41px; }
.pair svg { width: 13px; height: 11px; }
.stream .sb i { margin: 3px 0; }
.stream .sb .down { margin-top: auto; }
.stream .thumb { height: 294px; padding-top: 142px; }

.cursor { position: absolute; left: 896px; top: 262px; width: 10px; height: 14px; }
.mark { position: absolute; left: 99px; top: 637px; font: 800 64px/48px Inter, sans-serif; color: #050505; }
```
